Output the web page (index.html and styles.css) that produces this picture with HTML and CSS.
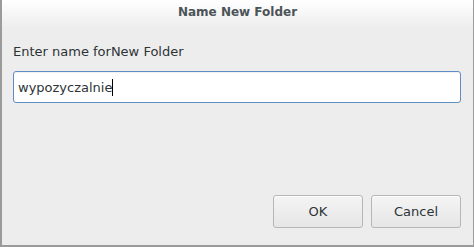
FILE: index.html
```html
<!DOCTYPE html>
<html lang="en">

<head>
    <meta charset="UTF-8">
    <title>Name New Folder</title>
    <link rel="stylesheet" href="styles.css">
</head>

<body>
    <div class="dialog">
        <div class="titlebar">Name New Folder</div>
        <div class="content">
            <div class="label">Enter name forNew Folder</div>
            <div class="entry">
                <span class="entry-text">wypozyczalnie</span><span class="caret"></span>
            </div>
        </div>
        <div class="actions">
            <button class="btn">OK</button>
            <button class="btn">Cancel</button>
        </div>
    </div>
</body>

</html>
```
FILE: styles.css
```css
* {
    margin: 0;
    padding: 0;
    box-sizing: border-box;
}

html,
body {
    width: 474px;
    height: 247px;
    background-color: #ededed;
    font-family: "DejaVu Sans", "Open Sans", sans-serif;
    color: #2e3436;
}

.dialog {
    width: 474px;
    height: 247px;
    display: flex;
    flex-direction: column;
    border: 1px solid #9b9b9b;
    border-top: none;
    border-left-width: 2px;
    border-bottom-width: 2px;
    background-color: #ededed;
}

.titlebar {
    height: 28px;
    display: flex;
    justify-content: center;
    align-items: center;
    padding-bottom: 4px;
    font-size: 12px;
    font-weight: bold;
    color: #4b5357;
    background: linear-gradient(#ffffff, #ededed);
}

.content {
    flex: 1;
    padding: 16px 12px 0 11px;
}

.label {
    font-size: 13px;
    line-height: 16px;
    margin-bottom: 11px;
}

.entry {
    height: 32px;
    display: flex;
    align-items: center;
    padding-left: 4px;
    border: 1px solid #5f8dc4;
    border-radius: 3px;
    background: #ffffff;
    box-shadow: inset 0 1px 1px rgba(0, 0, 0, 0.06);
    font-size: 13px;
}

.caret {
    width: 1px;
    height: 17px;
    background: #000000;
}

.actions {
    display: flex;
    justify-content: flex-end;
    gap: 8px;
    padding: 0 12px 17px 0;
}

.btn {
    width: 90px;
    height: 33px;
    font-family: inherit;
    font-size: 13px;
    color: #2e3436;
    border: 1px solid #b6b6b3;
    border-radius: 3px;
    background: linear-gradient(#f4f4f4, #e6e6e6);
    box-shadow: inset 0 1px 0 #ffffff;
}
```
